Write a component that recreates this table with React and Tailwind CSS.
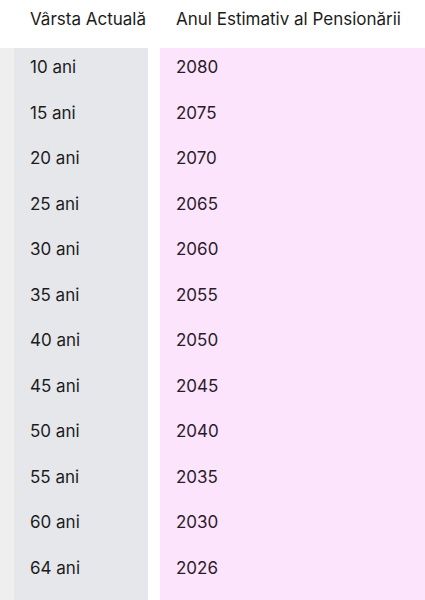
const rows = [
  ['10 ani', '2080'],
  ['15 ani', '2075'],
  ['20 ani', '2070'],
  ['25 ani', '2065'],
  ['30 ani', '2060'],
  ['35 ani', '2055'],
  ['40 ani', '2050'],
  ['45 ani', '2045'],
  ['50 ani', '2040'],
  ['55 ani', '2035'],
  ['60 ani', '2030'],
  ['64 ani', '2026'],
];

export default function App() {
  return (
    <div className="w-[425px] h-[600px] bg-white overflow-hidden text-[17px] text-[#1c1c1c]" style={{ fontFamily: 'Inter, "Noto Sans", sans-serif' }}>
      <div className="flex h-[48px] items-center">
        <div className="w-[160px] pl-[30px] pb-[8px]">Vârsta Actuală</div>
        <div className="pl-[16px] pb-[8px]">Anul Estimativ al Pensionării</div>
      </div>
      <div className="flex h-[552px]">
        <div className="w-[14px] bg-[#efefef]" />
        <div className="w-[134px] bg-[#e6e7eb] pb-[6px]">
          {rows.map(([age]) => (
            <div key={age} className="h-[45.5px] flex items-center pl-[16px] pb-[6px]">{age}</div>
          ))}
        </div>
        <div className="w-[12px]" />
        <div className="flex-1 bg-[#fce5fc] text-[#2b1a2b]">
          {rows.map(([age, year]) => (
            <div key={age} className="h-[45.5px] flex items-center pl-[16px] pb-[6px]">{year}</div>
          ))}
        </div>
      </div>
    </div>
  );
}
